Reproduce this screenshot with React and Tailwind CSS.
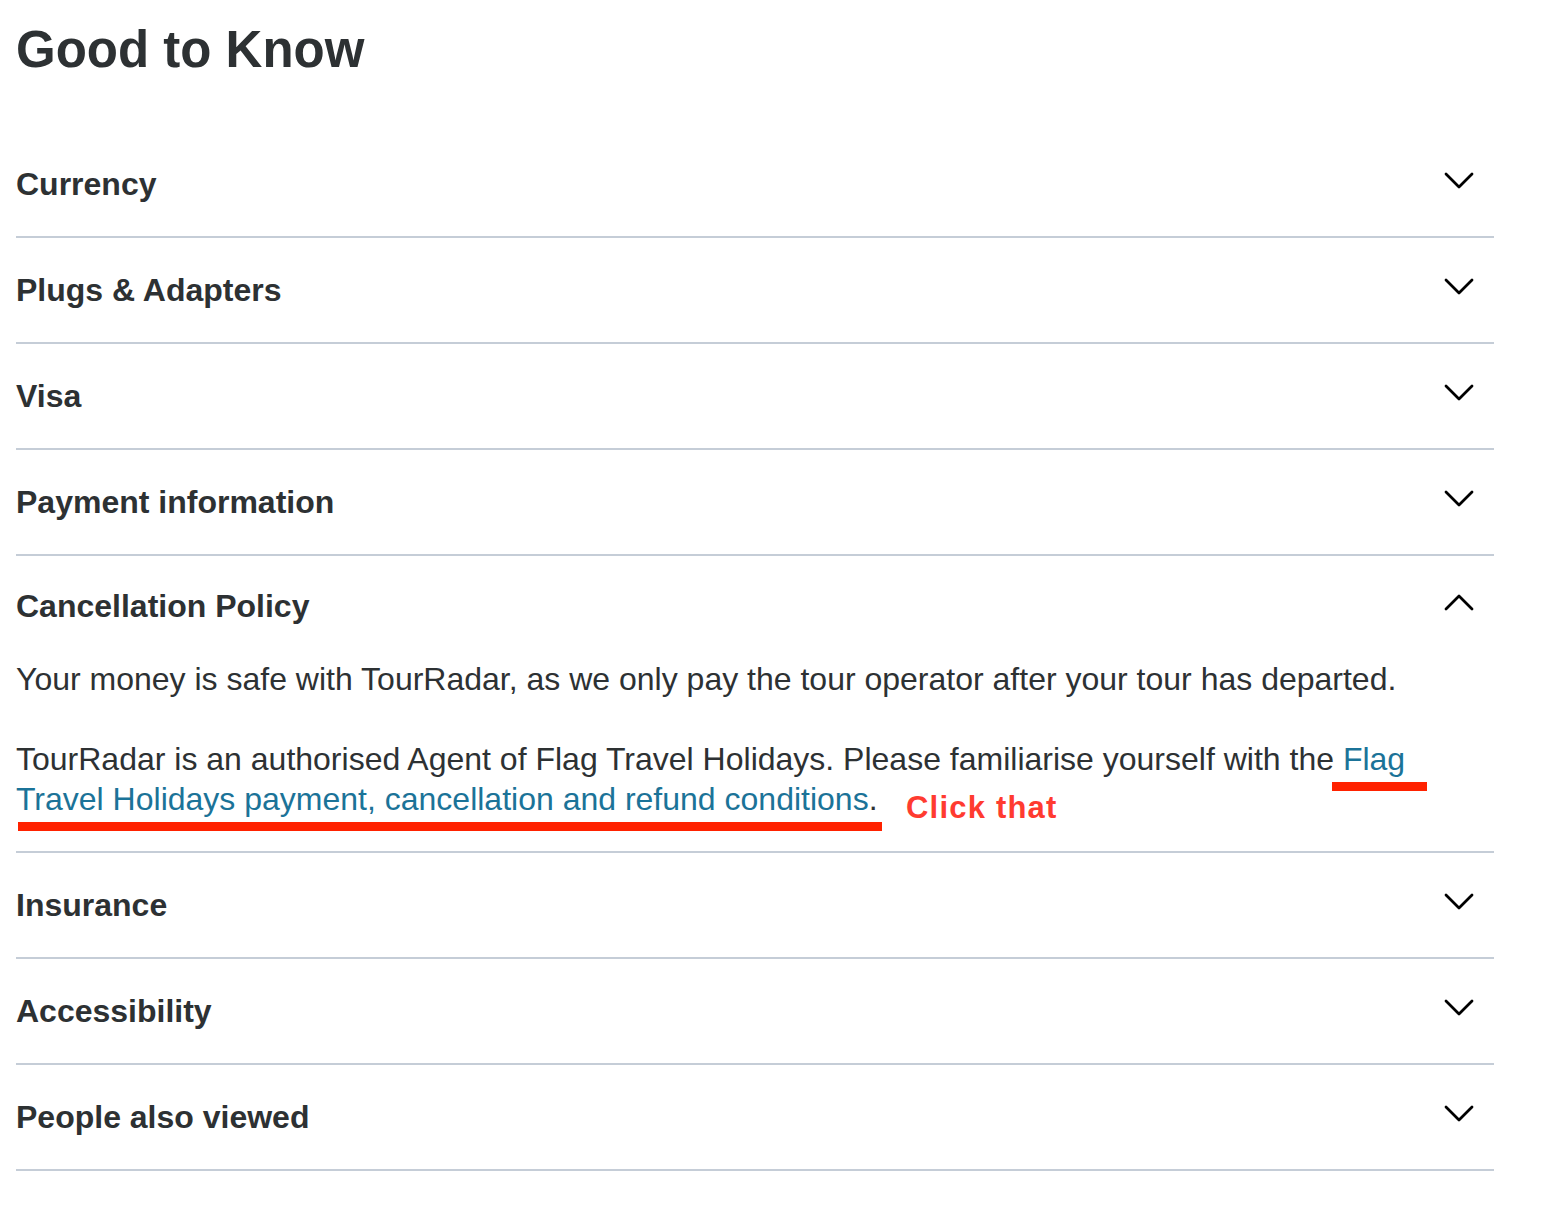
const items = [
    { title: 'Currency' },
    { title: 'Plugs & Adapters' },
    { title: 'Visa' },
    { title: 'Payment information' },
    { title: 'Cancellation Policy', open: true },
    { title: 'Insurance' },
    { title: 'Accessibility' },
    { title: 'People also viewed' },
];

const Chevron = ({ up }) => (
    <svg width="30" height="17" viewBox="0 0 30 17" fill="none" className={up ? 'rotate-180' : ''}>
        <polyline points="2,2 15,15 28,2" stroke="#000" strokeWidth="2.8" strokeLinecap="round" strokeLinejoin="round" />
    </svg>
);

const CancellationBody = () => (
    <div className="pb-[32px] pt-[5px] text-[32px] leading-[40px] text-[#2d3133]">
        <p>Your money is safe with TourRadar, as we only pay the tour operator after your tour has departed.</p>
        <p className="relative mt-[40px]">
            TourRadar is an authorised Agent of Flag Travel Holidays. Please familiarise yourself with the{' '}
            <a href="#" className="text-[#1b7398]">
                Flag Travel Holidays payment, cancellation and refund conditions
            </a>
            .
            {/* annotation overlay */}
            <span className="absolute left-[1316px] top-[43px] h-[9px] w-[95px] bg-[#ff2200]"></span>
            <span className="absolute left-[2px] top-[83px] h-[9px] w-[864px] bg-[#ff2200]"></span>
            <span className="absolute left-[890px] top-[53px] text-[31px] leading-none font-bold tracking-[1.2px] text-[#ff3b30] whitespace-nowrap">
                Click that
            </span>
        </p>
    </div>
);

export default function App() {
    return (
        <div className="min-h-[1210px] bg-white font-['Liberation_Sans',Arial,sans-serif] text-[#2d3133]">
            <div className="ml-4 w-[1478px]">
                <h1 className="pt-[24px] text-[51px] leading-none font-bold">Good to Know</h1>

                <div className="mt-[57px]">
                    {items.map((item) => (
                        <div key={item.title} className="border-b-2 border-[#c5cdd7]">
                            <div className={`flex items-center justify-between ${item.open ? 'h-[98px] pt-[2px]' : 'h-[104px]'}`}>
                                <h3 className="text-[32px] leading-[40px] font-bold">{item.title}</h3>
                                <div className={`mr-[20px] ${item.open ? '-mt-[8px]' : '-mt-[7px]'}`}>
                                    <Chevron up={item.open} />
                                </div>
                            </div>
                            {item.open && <CancellationBody />}
                        </div>
                    ))}
                </div>
            </div>
        </div>
    );
}
